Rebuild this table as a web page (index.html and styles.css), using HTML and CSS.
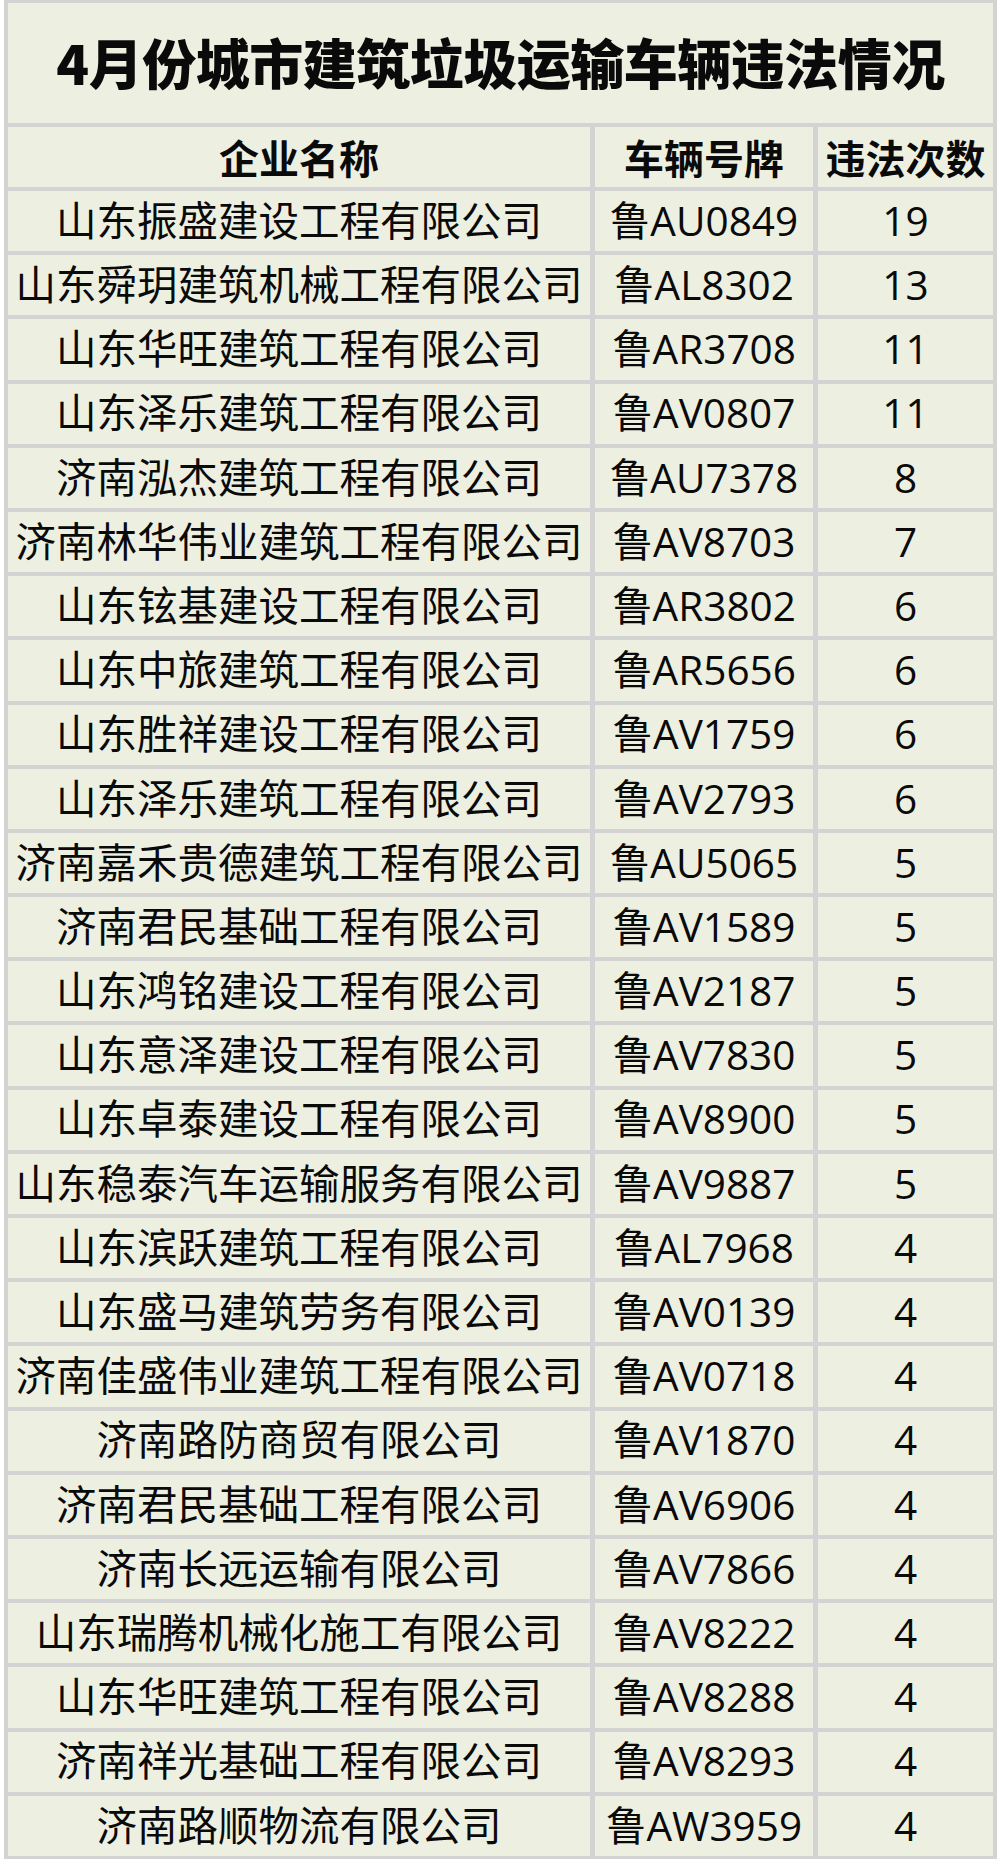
FILE: index.html
```html
<!DOCTYPE html>
<html lang="zh-CN">
<head>
<meta charset="utf-8">
<title>4月份城市建筑垃圾运输车辆违法情况</title>
<link rel="stylesheet" href="styles.css">
</head>
<body>
<div class="sheet">
  <div class="cell title">4月份城市建筑垃圾运输车辆违法情况</div>
  <div class="cell head">企业名称</div>
  <div class="cell head">车辆号牌</div>
  <div class="cell head">违法次数</div>

  <div class="cell">山东振盛建设工程有限公司</div><div class="cell">鲁AU0849</div><div class="cell">19</div>
  <div class="cell">山东舜玥建筑机械工程有限公司</div><div class="cell">鲁AL8302</div><div class="cell">13</div>
  <div class="cell">山东华旺建筑工程有限公司</div><div class="cell">鲁AR3708</div><div class="cell">11</div>
  <div class="cell">山东泽乐建筑工程有限公司</div><div class="cell">鲁AV0807</div><div class="cell">11</div>
  <div class="cell">济南泓杰建筑工程有限公司</div><div class="cell">鲁AU7378</div><div class="cell">8</div>
  <div class="cell">济南林华伟业建筑工程有限公司</div><div class="cell">鲁AV8703</div><div class="cell">7</div>
  <div class="cell">山东铉基建设工程有限公司</div><div class="cell">鲁AR3802</div><div class="cell">6</div>
  <div class="cell">山东中旅建筑工程有限公司</div><div class="cell">鲁AR5656</div><div class="cell">6</div>
  <div class="cell">山东胜祥建设工程有限公司</div><div class="cell">鲁AV1759</div><div class="cell">6</div>
  <div class="cell">山东泽乐建筑工程有限公司</div><div class="cell">鲁AV2793</div><div class="cell">6</div>
  <div class="cell">济南嘉禾贵德建筑工程有限公司</div><div class="cell">鲁AU5065</div><div class="cell">5</div>
  <div class="cell">济南君民基础工程有限公司</div><div class="cell">鲁AV1589</div><div class="cell">5</div>
  <div class="cell">山东鸿铭建设工程有限公司</div><div class="cell">鲁AV2187</div><div class="cell">5</div>
  <div class="cell">山东意泽建设工程有限公司</div><div class="cell">鲁AV7830</div><div class="cell">5</div>
  <div class="cell">山东卓泰建设工程有限公司</div><div class="cell">鲁AV8900</div><div class="cell">5</div>
  <div class="cell">山东稳泰汽车运输服务有限公司</div><div class="cell">鲁AV9887</div><div class="cell">5</div>
  <div class="cell">山东滨跃建筑工程有限公司</div><div class="cell">鲁AL7968</div><div class="cell">4</div>
  <div class="cell">山东盛马建筑劳务有限公司</div><div class="cell">鲁AV0139</div><div class="cell">4</div>
  <div class="cell">济南佳盛伟业建筑工程有限公司</div><div class="cell">鲁AV0718</div><div class="cell">4</div>
  <div class="cell">济南路防商贸有限公司</div><div class="cell">鲁AV1870</div><div class="cell">4</div>
  <div class="cell">济南君民基础工程有限公司</div><div class="cell">鲁AV6906</div><div class="cell">4</div>
  <div class="cell">济南长远运输有限公司</div><div class="cell">鲁AV7866</div><div class="cell">4</div>
  <div class="cell">山东瑞腾机械化施工有限公司</div><div class="cell">鲁AV8222</div><div class="cell">4</div>
  <div class="cell">山东华旺建筑工程有限公司</div><div class="cell">鲁AV8288</div><div class="cell">4</div>
  <div class="cell">济南祥光基础工程有限公司</div><div class="cell">鲁AV8293</div><div class="cell">4</div>
  <div class="cell">济南路顺物流有限公司</div><div class="cell">鲁AW3959</div><div class="cell">4</div>
</div>
</body>
</html>
```

FILE: styles.css
```css
html, body {
  margin: 0;
  padding: 0;
  background: #ffffff;
}

body {
  font-family: "Open Sans", "Noto Sans CJK SC", sans-serif;
  color: #0a0a0a;
}

.sheet {
  display: grid;
  grid-template-columns: 582px 218px 175px;
  grid-template-rows: 120px 60px;
  grid-auto-rows: 60.2px;
  column-gap: 5px;
  row-gap: 4px;
  width: 985px;
  margin-left: 4px;
  padding: 3px 4px 3px 4px;
  background: #d3d3d3;
}

.cell {
  background: #edf0e1;
  display: flex;
  align-items: center;
  justify-content: center;
  font-size: 40.5px;
  line-height: 1;
  white-space: nowrap;
  overflow: hidden;
}

.title {
  grid-column: 1 / -1;
  font-family: "Noto Sans CJK SC", sans-serif;
  font-size: 54px;
  font-weight: 900;
  letter-spacing: -0.5px;
  padding-bottom: 2px;
}

.head {
  font-family: "Noto Sans CJK SC", sans-serif;
  font-weight: 700;
  font-size: 40px;
}
```
